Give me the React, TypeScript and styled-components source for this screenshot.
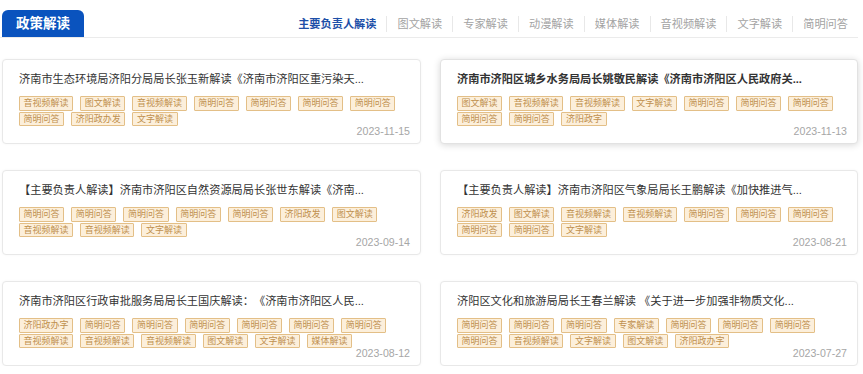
import React from 'react'
import styled, { createGlobalStyle } from 'styled-components'

interface Item_Type {
    title: string,
    tags: string[],
    date: string,
    active?: boolean,
}

const navs = ['主要负责人解读', '图文解读', '专家解读', '动漫解读', '媒体解读', '音视频解读', '文字解读', '简明问答']

const q = '简明问答'
const av = '音视频解读'

const items: Item_Type[] = [
    {
        title: '济南市生态环境局济阳分局局长张玉新解读《济南市济阳区重污染天...',
        tags: [av, '图文解读', av, q, q, q, q, q, '济阳政办发', '文字解读'],
        date: '2023-11-15',
    },
    {
        title: '济南市济阳区城乡水务局局长姚敬民解读《济南市济阳区人民政府关...',
        tags: ['图文解读', av, av, '文字解读', q, q, q, q, q, '济阳政字'],
        date: '2023-11-13',
        active: true,
    },
    {
        title: '【主要负责人解读】济南市济阳区自然资源局局长张世东解读《济南...',
        tags: [q, q, q, q, q, '济阳政发', '图文解读', av, av, '文字解读'],
        date: '2023-09-14',
    },
    {
        title: '【主要负责人解读】济南市济阳区气象局局长王鹏解读《加快推进气...',
        tags: ['济阳政发', '图文解读', av, av, q, q, q, q, q, '文字解读'],
        date: '2023-08-21',
    },
    {
        title: '济南市济阳区行政审批服务局局长王国庆解读：《济南市济阳区人民...',
        tags: ['济阳政办字', q, q, q, q, q, q, av, av, av, '图文解读', '文字解读', '媒体解读'],
        date: '2023-08-12',
    },
    {
        title: '济阳区文化和旅游局局长王春兰解读 《关于进一步加强非物质文化...',
        tags: [q, q, q, '专家解读', q, q, q, q, av, '文字解读', '图文解读', '济阳政办字'],
        date: '2023-07-27',
    },
]

const App = () => {
    return (
        <>
            <Global />
            <Page>
                <Header>
                    <Tab>政策解读</Tab>
                    <Nav>
                        {navs.map((n, i) => (
                            <NavItem key={n} $active={i === 0}>{n}</NavItem>
                        ))}
                    </Nav>
                </Header>
                <Grid>
                    {items.map((it, i) => (
                        <Card key={i} $active={it.active}>
                            <Title $active={it.active}>{it.title}</Title>
                            <Tags>
                                {it.tags.map((t, j) => <Tag key={j}>{t}</Tag>)}
                            </Tags>
                            <Date>{it.date}</Date>
                        </Card>
                    ))}
                </Grid>
            </Page>
        </>
    )
}

const Global = createGlobalStyle`
body {
    margin: 0;
    background: #fff;
    font-family: "Liberation Sans", "Noto Sans CJK SC", sans-serif;
}
`

const Page = styled.div`
width: 863px;
box-sizing: border-box;
padding: 10px 5px 0 2px;
`

const Header = styled.div`
display: flex;
justify-content: space-between;
align-items: flex-end;
border-bottom: 1px solid #ebebeb;
margin-left: -2px;
padding-left: 2px;
`

const Tab = styled.div`
width: 82px;
height: 27px;
line-height: 28px;
text-align: center;
background: #0a53be;
color: #fff;
font-size: 13.5px;
font-weight: bold;
border-radius: 6px 6px 0 0;
`

const Nav = styled.div`
display: flex;
margin-bottom: 5px;
`

const NavItem = styled.div<{ $active?: boolean }>`
padding: 0 10px;
line-height: 16px;
font-size: 11.2px;
color: ${p => p.$active ? '#1d4fa8' : '#a3a3a3'};
font-weight: ${p => p.$active ? 'bold' : 'normal'};
& + & {
    border-left: 1px solid #e8e8e8;
}
`

const Grid = styled.div`
display: grid;
grid-template-columns: 419px 418px;
column-gap: 19px;
row-gap: 26px;
margin-top: 21px;
`

const Card = styled.div<{ $active?: boolean }>`
height: 85px;
box-sizing: border-box;
padding: 12px 10px 0 16px;
border: 1px solid ${p => p.$active ? '#e2e2e2' : '#e8e8e8'};
border-radius: 4px;
box-shadow: ${p => p.$active ? '0 1px 7px rgba(0,0,0,0.16)' : '0 0 3px rgba(0,0,0,0.04)'};
background: #fff;
`

const Title = styled.div<{ $active?: boolean }>`
font-size: 11.2px;
line-height: 15px;
color: #333;
font-weight: ${p => p.$active ? 'bold' : 'normal'};
white-space: nowrap;
text-spacing-trim: space-all;
margin-bottom: 9px;
`

const Tags = styled.div`
display: flex;
flex-wrap: wrap;
row-gap: 1px;
column-gap: 7px;
padding-right: 5px;
`

const Tag = styled.span`
box-sizing: border-box;
padding: 0 3.6px;
height: 14.5px;
line-height: 12.5px;
font-size: 9px;
color: #bf8f4e;
background: #fcefdb;
border: 1px solid #e3bf87;
border-radius: 1px;
`

const Date = styled.div`
text-align: right;
font-size: 10.6px;
line-height: 10px;
color: #a6a6a6;
`

export default App
